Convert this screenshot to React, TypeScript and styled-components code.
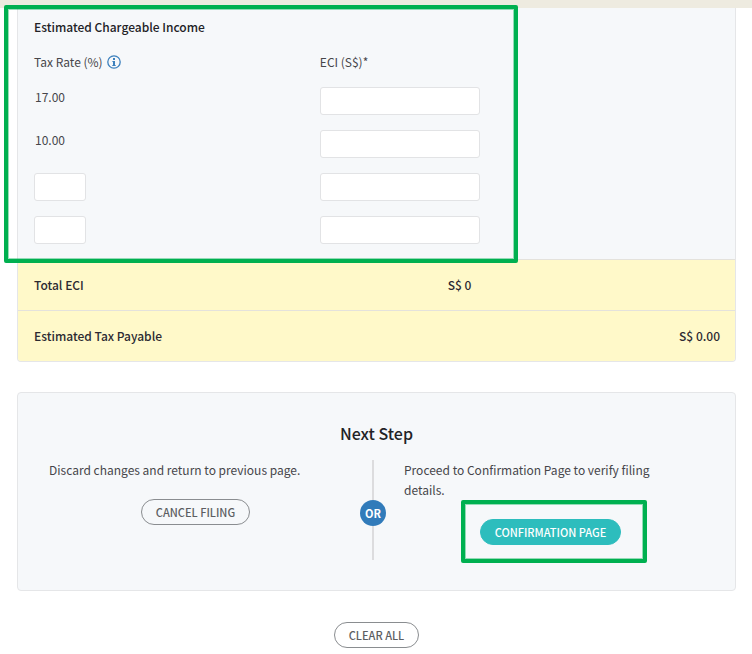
import React from 'react';
import styled, { createGlobalStyle } from 'styled-components';

const GlobalStyle = createGlobalStyle`
  *, *::before, *::after { box-sizing: border-box; }
  body {
    margin: 0;
    background: #fff;
    color: #46464a;
    font-family: 'Noto Sans CJK SC', 'Noto Sans', sans-serif;
    font-size: 12px;
    line-height: 20px;
  }
  button, input { font: inherit; }
`;

const TopStrip = styled.div`
  height: 8px;
  background: #eeebe0;
`;

const Page = styled.main`
  padding: 0 16px 6px 17px;
`;

const Panel = styled.section<{ $joined?: boolean }>`
  background: #f6f8fa;
  border: 1px solid #e5e6e8;
  border-top-width: ${(p) => (p.$joined ? '0' : '1px')};
  border-radius: ${(p) => (p.$joined ? '0 0 4px 4px' : '4px')};
`;

const IncomeGrid = styled.div`
  position: relative;
  display: grid;
  grid-template-columns: 5fr 3fr 4fr;
  align-items: start;
  row-gap: 15px;
  padding: 9px 15px 15px 16px;
`;

const Frame = styled.div`
  position: absolute;
  border: 4px solid #00b050;
  border-radius: 2px;
  box-shadow: inset 0 0 0 1px rgba(0, 176, 80, 0.4);
  pointer-events: none;
`;

const IncomeFrame = styled(Frame)`
  grid-column: 1 / 3;
  inset: -3px -27px -4px -30px;
`;

const ConfirmFrame = styled(Frame)`
  inset: -19px -26px -18px -19px;
`;

const SectionTitle = styled.h2`
  grid-column: 1 / -1;
  margin: 0;
  color: #222226;
  font-size: 12px;
  font-weight: 500;
`;

const ColumnLabel = styled.div<{ $column: number }>`
  grid-column: ${(p) => p.$column};
  display: flex;
  align-items: center;
  gap: 4px;
`;

const InfoButton = styled.button`
  display: flex;
  padding: 0;
  border: 0;
  background: none;
  color: #3c80bd;
`;

const RateCell = styled.div`
  grid-column: 1;
`;

const FixedRate = styled.span`
  display: block;
  padding-left: 1px;
`;

const AmountCell = styled.div`
  grid-column: 2;
  padding-right: 11px;
`;

const TextInput = styled.input<{ $short?: boolean }>`
  display: block;
  width: ${(p) => (p.$short ? '52px' : '100%')};
  height: 28px;
  padding: 0 8px;
  border: 1px solid #e2e3e5;
  border-radius: 3px;
  background: #fff;
`;

const TotalRow = styled.div`
  display: grid;
  grid-template-columns: 5fr 3fr 4fr;
  padding: 15px 15px 15px 16px;
  border-top: 1px solid #e4e2dc;
  background: #fff9c9;
  color: #2c2a32;
  font-weight: 500;
  &:last-child { border-radius: 0 0 3px 3px; }
`;

const TotalValue = styled.span<{ $column: number }>`
  grid-column: ${(p) => p.$column};
  padding-right: ${(p) => (p.$column === 2 ? '20px' : '0')};
  text-align: right;
`;

const NextPanel = styled(Panel)`
  margin-top: 30px;
  padding-bottom: 30px;
`;

const NextTitle = styled.h2`
  margin: 0;
  padding: 28px 0 15px;
  color: #222226;
  font-size: 16px;
  font-weight: 500;
  line-height: 24px;
  text-align: center;
`;

const Choices = styled.div`
  display: grid;
  grid-template-columns: 1fr 62px 1fr;
  padding: 0 38px 0 31px;
`;

const Choice = styled.div`
  display: flex;
  flex-direction: column;
  align-items: center;
`;

const ChoiceText = styled.p`
  align-self: stretch;
  margin: 0 0 19px;
  padding-right: 20px;
`;

const Divider = styled.div`
  display: flex;
  flex-direction: column;
  align-items: center;
  min-height: 100px;
  &::before, &::after {
    content: '';
    flex: 1;
    width: 2px;
    background: #dcdcde;
  }
  &::before { min-height: 40px; }
`;

const OrBadge = styled.span`
  width: 26px;
  height: 26px;
  border-radius: 50%;
  background: #317bba;
  color: #fff;
  font-size: 11px;
  font-weight: 700;
  line-height: 26px;
  text-align: center;
`;

const PillButton = styled.button<{ $primary?: boolean }>`
  height: 26px;
  padding: 0 14px;
  border: 1px solid ${(p) => (p.$primary ? '#2dbdbd' : '#8a8d90')};
  border-radius: 13px;
  background: ${(p) => (p.$primary ? '#2dbdbd' : 'transparent')};
  color: ${(p) => (p.$primary ? '#fff' : '#5c5e62')};
  font-size: 11px;
  font-weight: 500;
  line-height: 24px;
  white-space: nowrap;
`;

const Highlighted = styled.div`
  position: relative;
  display: flex;
`;

const Footer = styled.div`
  display: flex;
  justify-content: center;
  padding-top: 31px;
`;

const rates = [{ rate: '17.00' }, { rate: '10.00' }, { rate: '' }, { rate: '' }];

export default function App() {
  return (
    <>
      <GlobalStyle />
      <TopStrip />
      <Page>
        <Panel $joined>
          <IncomeGrid>
            <SectionTitle>Estimated Chargeable Income</SectionTitle>
            <ColumnLabel $column={1}>
              Tax Rate (%)
              <InfoButton type="button" aria-label="About tax rates">
                <svg width="14" height="14" viewBox="0 0 14 14" fill="none">
                  <circle cx="7" cy="7" r="6.2" stroke="currentColor" strokeWidth="1.3" />
                  <path d="M6 3h2v2H6zM5.4 6H8v4h.7v1H5.3v-1H6V7h-.6z" fill="currentColor" />
                </svg>
              </InfoButton>
            </ColumnLabel>
            <ColumnLabel $column={2}>ECI (S$)*</ColumnLabel>
            {rates.map(({ rate }, i) => (
              <React.Fragment key={i}>
                <RateCell>
                  {rate ? (
                    <FixedRate>{rate}</FixedRate>
                  ) : (
                    <TextInput $short type="text" aria-label={`Tax rate, row ${i + 1}`} />
                  )}
                </RateCell>
                <AmountCell>
                  <TextInput type="text" aria-label={`ECI amount, row ${i + 1}`} />
                </AmountCell>
              </React.Fragment>
            ))}
            <IncomeFrame />
          </IncomeGrid>
          <TotalRow>
            <span>Total ECI</span>
            <TotalValue $column={2}>S$ 0</TotalValue>
          </TotalRow>
          <TotalRow>
            <span>Estimated Tax Payable</span>
            <TotalValue $column={3}>S$ 0.00</TotalValue>
          </TotalRow>
        </Panel>

        <NextPanel>
          <NextTitle>Next Step</NextTitle>
          <Choices>
            <Choice>
              <ChoiceText>Discard changes and return to previous page.</ChoiceText>
              <PillButton type="button">CANCEL FILING</PillButton>
            </Choice>
            <Divider>
              <OrBadge>OR</OrBadge>
            </Divider>
            <Choice>
              <ChoiceText>Proceed to Confirmation Page to verify filing details.</ChoiceText>
              <Highlighted>
                <PillButton $primary type="button">CONFIRMATION PAGE</PillButton>
                <ConfirmFrame />
              </Highlighted>
            </Choice>
          </Choices>
        </NextPanel>

        <Footer>
          <PillButton type="button">CLEAR ALL</PillButton>
        </Footer>
      </Page>
    </>
  );
}
